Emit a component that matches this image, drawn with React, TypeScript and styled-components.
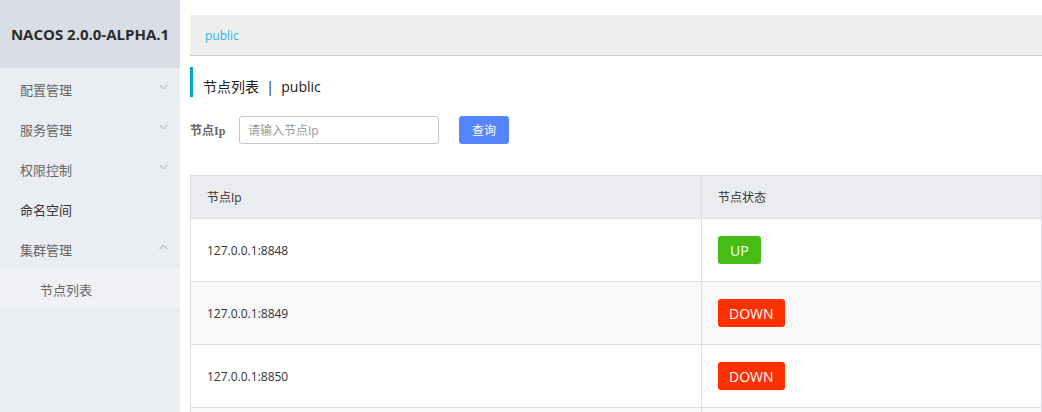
import styled, { createGlobalStyle } from "styled-components";

const GlobalStyle = createGlobalStyle`
    html, body {
        margin: 0;
        padding: 0;
        background: #fff;
        font-family: "Open Sans", "Noto Sans CJK SC", sans-serif;
    }
`;

type MenuEntry = {
    label: string
    arrow?: "down" | "up"
    strong?: boolean
}

const menu: MenuEntry[] = [
    {label: "配置管理", arrow: "down"},
    {label: "服务管理", arrow: "down"},
    {label: "权限控制", arrow: "down"},
    {label: "命名空间", strong: true},
    {label: "集群管理", arrow: "up"},
];

const nodes = [
    {ip: "127.0.0.1:8848", state: "UP"},
    {ip: "127.0.0.1:8849", state: "DOWN"},
    {ip: "127.0.0.1:8850", state: "DOWN"},
];

function Chevron({dir}: { dir: "down" | "up" }) {
    return (
        <StyledChevron width="9" height="6" viewBox="0 0 9 6">
            {dir === "down"
                ? <polyline points="0.5,0.8 4.5,4.8 8.5,0.8" fill="none" stroke="#a0a4ad" strokeWidth="1"/>
                : <polyline points="0.5,5.2 4.5,1.2 8.5,5.2" fill="none" stroke="#a0a4ad" strokeWidth="1"/>}
        </StyledChevron>
    );
}

export default function App() {
    return (
        <StyledPage>
            <GlobalStyle/>
            <StyledSidebar>
                <StyledBrand>NACOS 2.0.0-ALPHA.1</StyledBrand>
                {menu.map(item => (
                    <StyledMenuItem key={item.label} $strong={item.strong}>
                        <span>{item.label}</span>
                        {item.arrow && <Chevron dir={item.arrow}/>}
                    </StyledMenuItem>
                ))}
                <StyledSubItem>节点列表</StyledSubItem>
            </StyledSidebar>
            <StyledMain>
                <StyledBreadcrumb>public</StyledBreadcrumb>
                <StyledTitle>节点列表 &nbsp;|&nbsp; public</StyledTitle>
                <StyledForm>
                    <StyledLabel>节点Ip</StyledLabel>
                    <StyledInput placeholder="请输入节点Ip"/>
                    <StyledButton>查询</StyledButton>
                </StyledForm>
                <StyledTable>
                    <thead>
                    <tr>
                        <StyledTh>节点Ip</StyledTh>
                        <StyledTh>节点状态</StyledTh>
                    </tr>
                    </thead>
                    <tbody>
                    {nodes.map((n, i) => (
                        <StyledRow key={n.ip} $alt={i % 2 === 1}>
                            <StyledTd>{n.ip}</StyledTd>
                            <StyledTd>
                                <StyledTag $up={n.state === "UP"}>{n.state}</StyledTag>
                            </StyledTd>
                        </StyledRow>
                    ))}
                    <StyledRow $alt>
                        <StyledTd/>
                        <StyledTd/>
                    </StyledRow>
                    </tbody>
                </StyledTable>
            </StyledMain>
        </StyledPage>
    );
}

const StyledPage = styled.div`
    display: flex;
    height: 412px;
    overflow: hidden;
`;

const StyledSidebar = styled.aside`
    width: 180px;
    flex-shrink: 0;
    background: #eaedf1;
    display: flex;
    flex-direction: column;
`;

const StyledBrand = styled.div`
    height: 68px;
    flex-shrink: 0;
    background: #d9dde5;
    display: flex;
    align-items: center;
    justify-content: center;
    font-family: "Open Sans", "Noto Sans", sans-serif;
    font-weight: bold;
    font-size: 15px;
    color: #2b2b2b;
    margin-bottom: 1px;
`;

const StyledMenuItem = styled.div<{ $strong?: boolean }>`
    height: 40px;
    flex-shrink: 0;
    padding: 0 12px 0 20px;
    display: flex;
    align-items: center;
    justify-content: space-between;
    font-size: 13px;
    color: ${p => p.$strong ? "#333" : "#666"};
`;

const StyledChevron = styled.svg`
    margin-top: -4px;
`;

const StyledSubItem = styled.div`
    height: 40px;
    flex-shrink: 0;
    padding-left: 40px;
    display: flex;
    align-items: center;
    background: #f0f2f5;
    font-size: 13px;
    color: #666;
`;

const StyledMain = styled.main`
    flex: 1;
    padding: 15px 0 0 10px;
    min-width: 0;
`;

const StyledBreadcrumb = styled.div`
    height: 40px;
    background: #eee;
    border-bottom: 1px solid #ccc;
    display: flex;
    align-items: center;
    padding-left: 15px;
    font-size: 12px;
    color: #2ab7dc;
`;

const StyledTitle = styled.div`
    margin-top: 11px;
    height: 30px;
    box-sizing: border-box;
    border-left: 3px solid #09a0d3;
    padding: 7px 0 0 10px;
    display: flex;
    align-items: center;
    font-size: 14px;
    color: #222;
`;

const StyledForm = styled.div`
    margin-top: 19px;
    display: flex;
    align-items: center;
    height: 28px;
`;

const StyledLabel = styled.label`
    font-family: "Liberation Serif", "Noto Sans CJK SC", serif;
    font-weight: bold;
    font-size: 12px;
    color: #666;
    width: 49px;
`;

const StyledInput = styled.input`
    width: 200px;
    height: 28px;
    box-sizing: border-box;
    border: 1px solid #c4c6cf;
    border-radius: 3px;
    padding: 0 8px;
    font-size: 12px;
    font-family: "Open Sans", "Noto Sans CJK SC", sans-serif;
    outline: none;

    &::placeholder {
        color: #999;
    }
`;

const StyledButton = styled.button`
    margin-left: 20px;
    width: 50px;
    height: 28px;
    border: none;
    border-radius: 3px;
    background: #5584ff;
    color: #fff;
    font-size: 12px;
    font-family: "Open Sans", "Noto Sans CJK SC", sans-serif;
    cursor: pointer;
`;

const StyledTable = styled.table`
    margin-top: 31px;
    width: 852px;
    border-collapse: collapse;
    table-layout: fixed;
    font-size: 12px;
    color: #333;
`;

const StyledTh = styled.th`
    height: 42px;
    background: #ebecf0;
    border: 1px solid #dcdee3;
    text-align: left;
    font-weight: normal;
    padding: 0 16px;

    &:first-child {
        width: 478px;
    }
`;

const StyledRow = styled.tr<{ $alt?: boolean }>`
    background: ${p => p.$alt ? "#f7f8fa" : "#fff"};
`;

const StyledTd = styled.td`
    height: 62px;
    border: 1px solid #dcdee3;
    padding: 0 16px;
`;

const StyledTag = styled.span<{ $up: boolean }>`
    display: inline-flex;
    align-items: center;
    justify-content: center;
    height: 28px;
    padding: 0 ${p => p.$up ? "12px" : "11px"};
    border-radius: 3px;
    background: ${p => p.$up ? "#46bc15" : "#ff3000"};
    color: #fff;
    font-size: 14px;
`;
